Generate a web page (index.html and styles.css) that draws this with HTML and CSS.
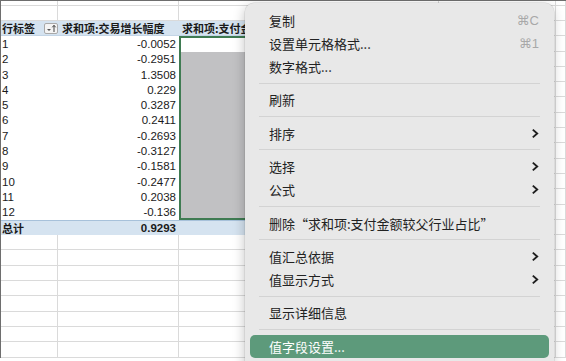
FILE: index.html
```html
<!DOCTYPE html>
<html lang="zh-CN">
    <head>
        <meta charset="UTF-8">
        <title>数据透视表 右键菜单</title>
        <link rel="stylesheet" href="styles.css">
    </head>
    <body>
        <!-- 표 영역 -->
        <div class="sheet">
            <div class="row row-top"><div class="c"></div><div class="c"></div><div class="c"></div><div class="c"></div><div class="c"></div></div>
            <div class="row row-blank"><div class="c"></div><div class="c"></div><div class="c"></div><div class="c"></div><div class="c"></div></div>

            <div class="row head">
                <div class="c pv lab">行标签
                    <span class="filter">
                        <svg width="14" height="11" viewBox="0 0 14 11">
                            <rect x="0.5" y="0.5" width="13" height="10" rx="1.5" fill="#f4f4f4" stroke="#a9a9a9"/>
                            <path d="M3 6 L7 6 L5 8 Z" fill="#555"/>
                            <path d="M10 9 L10 2.5 M8.3 4.3 L10 2.3 L11.7 4.3" stroke="#444" stroke-width="1" fill="none"/>
                        </svg>
                    </span>
                </div>
                <div class="c pv hb">求和项:交易增长幅度</div>
                <div class="c pv hc">求和项:支付金额较父行业占比</div>
                <div class="c"></div>
                <div class="c"></div>
            </div>

            <div class="row"><div class="c pv lab">1</div><div class="c pv num">-0.0052</div><div class="c sel first"></div><div class="c"></div><div class="c"></div></div>
            <div class="row"><div class="c pv lab">2</div><div class="c pv num">-0.2951</div><div class="c sel"></div><div class="c"></div><div class="c"></div></div>
            <div class="row"><div class="c pv lab">3</div><div class="c pv num">1.3508</div><div class="c sel"></div><div class="c"></div><div class="c"></div></div>
            <div class="row"><div class="c pv lab">4</div><div class="c pv num">0.229</div><div class="c sel"></div><div class="c"></div><div class="c"></div></div>
            <div class="row"><div class="c pv lab">5</div><div class="c pv num">0.3287</div><div class="c sel"></div><div class="c"></div><div class="c"></div></div>
            <div class="row"><div class="c pv lab">6</div><div class="c pv num">0.2411</div><div class="c sel"></div><div class="c"></div><div class="c"></div></div>
            <div class="row"><div class="c pv lab">7</div><div class="c pv num">-0.2693</div><div class="c sel"></div><div class="c"></div><div class="c"></div></div>
            <div class="row"><div class="c pv lab">8</div><div class="c pv num">-0.3127</div><div class="c sel"></div><div class="c"></div><div class="c"></div></div>
            <div class="row"><div class="c pv lab">9</div><div class="c pv num">-0.1581</div><div class="c sel"></div><div class="c"></div><div class="c"></div></div>
            <div class="row"><div class="c pv lab">10</div><div class="c pv num">-0.2477</div><div class="c sel"></div><div class="c"></div><div class="c"></div></div>
            <div class="row"><div class="c pv lab">11</div><div class="c pv num">0.2038</div><div class="c sel"></div><div class="c"></div><div class="c"></div></div>
            <div class="row"><div class="c pv lab">12</div><div class="c pv num">-0.136</div><div class="c sel last"></div><div class="c"></div><div class="c"></div></div>

            <div class="row total">
                <div class="c pv lab">总计</div>
                <div class="c pv num">0.9293</div>
                <div class="c pv"></div>
                <div class="c"></div>
                <div class="c"></div>
            </div>

            <div class="row"><div class="c"></div><div class="c"></div><div class="c"></div><div class="c"></div><div class="c"></div></div>
            <div class="row"><div class="c"></div><div class="c"></div><div class="c"></div><div class="c"></div><div class="c"></div></div>
            <div class="row"><div class="c"></div><div class="c"></div><div class="c"></div><div class="c"></div><div class="c"></div></div>
            <div class="row"><div class="c"></div><div class="c"></div><div class="c"></div><div class="c"></div><div class="c"></div></div>
            <div class="row"><div class="c"></div><div class="c"></div><div class="c"></div><div class="c"></div><div class="c"></div></div>
            <div class="row"><div class="c"></div><div class="c"></div><div class="c"></div><div class="c"></div><div class="c"></div></div>
            <div class="row"><div class="c"></div><div class="c"></div><div class="c"></div><div class="c"></div><div class="c"></div></div>
            <div class="row"><div class="c"></div><div class="c"></div><div class="c"></div><div class="c"></div><div class="c"></div></div>
        </div>

        <!-- 우클릭 메뉴 -->
        <div class="menu">
            <div class="item">复制<span class="key">⌘C</span></div>
            <div class="item">设置单元格格式...<span class="key">⌘1</span></div>
            <div class="item">数字格式...</div>
            <div class="sep"></div>
            <div class="item">刷新</div>
            <div class="sep"></div>
            <div class="item">排序<svg class="arr" width="8" height="11" viewBox="0 0 8 11"><path d="M1.8 1.6 L6.2 5.5 L1.8 9.4"/></svg></div>
            <div class="sep"></div>
            <div class="item">选择<svg class="arr" width="8" height="11" viewBox="0 0 8 11"><path d="M1.8 1.6 L6.2 5.5 L1.8 9.4"/></svg></div>
            <div class="item">公式<svg class="arr" width="8" height="11" viewBox="0 0 8 11"><path d="M1.8 1.6 L6.2 5.5 L1.8 9.4"/></svg></div>
            <div class="sep"></div>
            <div class="item">删除“求和项:支付金额较父行业占比”</div>
            <div class="sep"></div>
            <div class="item">值汇总依据<svg class="arr" width="8" height="11" viewBox="0 0 8 11"><path d="M1.8 1.6 L6.2 5.5 L1.8 9.4"/></svg></div>
            <div class="item">值显示方式<svg class="arr" width="8" height="11" viewBox="0 0 8 11"><path d="M1.8 1.6 L6.2 5.5 L1.8 9.4"/></svg></div>
            <div class="sep"></div>
            <div class="item">显示详细信息</div>
            <div class="sep"></div>
            <div class="item on">值字段设置...</div>
        </div>
    </body>
</html>
```

FILE: styles.css
```css
html, body{
    margin: 0;
}
body{
    width: 566px;
    height: 361px;
    overflow: hidden;
    position: relative;
    background: #fff;
    font-family: "Liberation Sans", "Noto Sans CJK SC", sans-serif;
    color: #1a1a1a;
}

/* 시트 */
.sheet{
    border-top: 1px solid #6e6e6e;
    border-left: 1px solid #6e6e6e;
}
.row{
    display: grid;
    grid-template-columns: 57px 121px 260px 117px 1fr;
    height: 15.3px;
}
.row-top{
    height: 5px;
}
.row-blank{
    height: 15px;
}
/* 셀 공통 */
.c{
    box-sizing: border-box;
    border-right: 1px solid #dadada;
    border-bottom: 1px solid #dadada;
    font-size: 11.5px;
    line-height: 14px;
    white-space: nowrap;
    overflow: hidden;
    display: flex;
    align-items: center;
}
/* 피벗 영역은 격자선 없음 */
.pv{
    border: 0;
}
.lab{
    padding-left: 1px;
    justify-content: space-between;
}
.num{
    justify-content: flex-end;
    padding-right: 3px;
}

/* 머리행 / 총계행 */
.head .pv,
.total .pv{
    background: #d5e3f0;
    font-weight: bold;
    font-size: 11px;
    font-family: "Noto Sans CJK SC", sans-serif;
}
.head .pv{
    border-bottom: 1px solid #c3d5e6;
}
.total .pv{
    border-top: 1px solid #a7c1da;
}
.total .num{
    font-family: "Liberation Sans", sans-serif;
    font-size: 11.5px;
}
.hb{
    padding-left: 4px;
}
.hc{
    padding-left: 3px;
}
.filter{
    display: flex;
}

/* 선택 범위 */
.sel{
    background: #c1c1c3;
    border: 0;
    border-left: 2px solid #3f7b52;
    border-right: 2px solid #3f7b52;
}
.sel.first{
    background: #fff;
    border-top: 2px solid #3f7b52;
}
.sel.last{
    border-bottom: 2px solid #3f7b52;
}

/* 메뉴 */
.menu{
    position: absolute;
    left: 245px;
    top: 3px;
    width: 309px;
    height: 380px;
    box-sizing: border-box;
    padding-top: 6px;
    background: #e8e8e8;
    border-radius: 9px;
    box-shadow: 0 0 0 0.5px rgba(0, 0, 0, .12), -1px 3px 12px rgba(0, 0, 0, .22);
    font-family: "Noto Sans CJK SC", sans-serif;
    font-size: 13px;
    color: #222;
}
.item{
    height: 23px;
    margin: 0 5px;
    padding: 0 10px 0 19px;
    display: flex;
    align-items: center;
    justify-content: space-between;
    border-radius: 5px;
}
.item.on{
    background: #5d9a7b;
    color: #fff;
}
.key{
    color: #a8a8a8;
    font-family: "Liberation Sans", "DejaVu Sans", sans-serif;
}
.arr path{
    fill: none;
    stroke: #1e1e1e;
    stroke-width: 1.9;
}
.sep{
    height: 1px;
    margin: 4.7px 14px;
    background: #d3d3d3;
}
```
